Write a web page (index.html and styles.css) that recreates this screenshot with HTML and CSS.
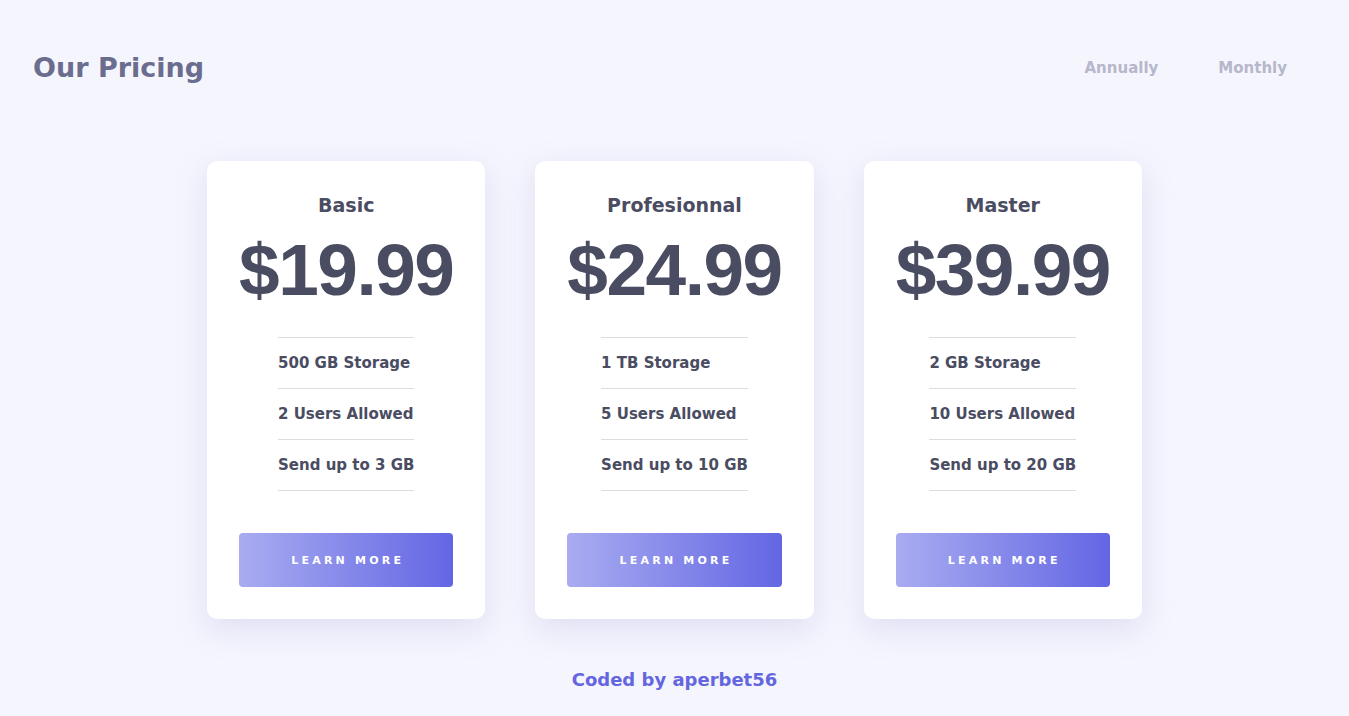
FILE: index.html
```html
<!DOCTYPE html>
<html lang="en">
<head>
<meta charset="utf-8">
<title>Our Pricing</title>
<link rel="stylesheet" href="styles.css">
</head>
<body>
  <header class="top">
    <h1 class="brand">Our Pricing</h1>
    <nav class="periods">
      <span class="period">Annually</span>
      <span class="period">Monthly</span>
    </nav>
  </header>
  <main class="plans">
    <section class="card">
      <h2 class="plan-name">Basic</h2>
      <div class="price">$19.99</div>
      <ul class="features">
        <li>500 GB Storage</li>
        <li>2 Users Allowed</li>
        <li>Send up to 3 GB</li>
      </ul>
      <button class="cta">LEARN MORE</button>
    </section>
    <section class="card">
      <h2 class="plan-name">Profesionnal</h2>
      <div class="price">$24.99</div>
      <ul class="features">
        <li>1 TB Storage</li>
        <li>5 Users Allowed</li>
        <li>Send up to 10 GB</li>
      </ul>
      <button class="cta">LEARN MORE</button>
    </section>
    <section class="card">
      <h2 class="plan-name">Master</h2>
      <div class="price">$39.99</div>
      <ul class="features">
        <li>2 GB Storage</li>
        <li>10 Users Allowed</li>
        <li>Send up to 20 GB</li>
      </ul>
      <button class="cta">LEARN MORE</button>
    </section>
  </main>
  <footer class="credit">Coded by aperbet56</footer>
</body>
</html>
```
FILE: styles.css
```css
* { box-sizing: border-box; }
html, body { margin: 0; padding: 0; }
body {
  background: #f5f5fe;
  font-family: "DejaVu Sans", "Open Sans", sans-serif;
  font-weight: 700;
  color: #4a4c62;
  min-height: 716px;
}
.top {
  display: flex;
  justify-content: space-between;
  align-items: center;
  padding: 49px 62px 0 33px;
  height: 86px;
}
.brand {
  margin: 0;
  font-size: 27px;
  line-height: 38px;
  color: #6b6d8f;
  font-weight: 700;
}
.periods {
  display: flex;
  gap: 60px;
}
.period {
  font-size: 15px;
  color: #b6b7ca;
}
.plans {
  display: flex;
  justify-content: center;
  align-items: flex-start;
  gap: 50px;
  margin-top: 75px;
}
.card {
  background: #fff;
  border-radius: 10px;
  padding: 32px;
  display: flex;
  flex-direction: column;
  align-items: center;
  box-shadow: 0 10px 30px rgba(160, 160, 210, 0.25);
}
.plan-name {
  margin: 0;
  font-size: 19px;
  line-height: 24px;
  font-weight: 700;
}
.price {
  font-family: "Liberation Sans", Arial, sans-serif;
  font-size: 73px;
  line-height: 90px;
  margin-top: 8px;
  letter-spacing: -1.5px;
}
.features {
  list-style: none;
  margin: 22px 0 0;
  padding: 0;
  border-top: 1px solid #dcdce3;
}
.features li {
  font-size: 15px;
  line-height: 20px;
  padding: 15px 0;
  border-bottom: 1px solid #dcdce3;
}
.cta {
  margin-top: 42px;
  align-self: stretch;
  height: 54px;
  border: 0;
  border-radius: 4px;
  background: linear-gradient(90deg, #a9acf0 0%, #6366e3 100%);
  color: #fff;
  font-family: inherit;
  font-weight: 700;
  font-size: 11px;
  letter-spacing: 3.2px;
  padding: 0 0 0 3px;
}
.credit {
  text-align: center;
  margin-top: 50px;
  font-size: 18px;
  line-height: 22px;
  color: #6466e0;
}
```
